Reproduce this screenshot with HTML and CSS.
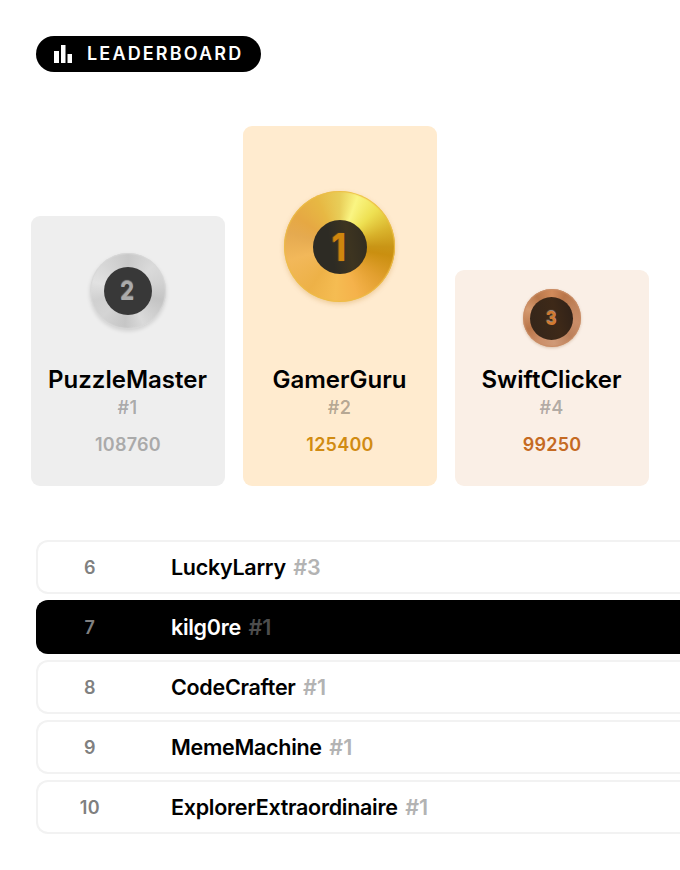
FILE: index.html
```html
<!DOCTYPE html>
<html lang="en">
<head>
<meta charset="utf-8">
<title>Leaderboard</title>
<link rel="stylesheet" href="styles.css">
</head>
<body>
<main class="page">
  <h1 class="badge">
    <svg class="badge-icon" width="19" height="18" viewBox="0 0 19 18"><path fill="#fff" d="M0 6h5v12H0zM7 0h4.5v18H7zM13.5 9h4.5v9h-4.5z"/></svg>
    <span>LEADERBOARD</span>
  </h1>
  <section class="podium">
    <article class="card silver">
      <div class="medal"><div class="core"><span>2</span></div></div>
      <h2 class="name">PuzzleMaster</h2>
      <div class="tag">#1</div>
      <div class="score">108760</div>
    </article>
    <article class="card gold">
      <div class="medal"><div class="core"><span>1</span></div></div>
      <h2 class="name">GamerGuru</h2>
      <div class="tag">#2</div>
      <div class="score">125400</div>
    </article>
    <article class="card bronze">
      <div class="medal"><div class="core"><span>3</span></div></div>
      <h2 class="name">SwiftClicker</h2>
      <div class="tag">#4</div>
      <div class="score">99250</div>
    </article>
  </section>
  <section class="list">
    <div class="row"><span class="rank">6</span><span class="player">LuckyLarry</span><span class="hash">#3</span></div>
    <div class="row current"><span class="rank">7</span><span class="player">kilg0re</span><span class="hash">#1</span></div>
    <div class="row"><span class="rank">8</span><span class="player">CodeCrafter</span><span class="hash">#1</span></div>
    <div class="row"><span class="rank">9</span><span class="player">MemeMachine</span><span class="hash">#1</span></div>
    <div class="row"><span class="rank">10</span><span class="player">ExplorerExtraordinaire</span><span class="hash">#1</span></div>
  </section>
</main>
</body>
</html>
```
FILE: styles.css
```css
* { box-sizing: border-box; }
body {
  margin: 0;
  background: #fff;
  color: #000;
  font-family: Inter, "Liberation Sans", sans-serif;
  font-weight: 600;
}
.page { height: 870px; padding: 36px 0 0 36px; }
.badge {
  display: flex;
  align-items: center;
  gap: 14px;
  width: 225px;
  height: 36px;
  margin: 0;
  padding-left: 18px;
  border-radius: 18px;
  background: #000;
  color: #fff;
  font-size: 18px;
  line-height: 36px;
  font-weight: 600;
  letter-spacing: 2.16px;
  white-space: nowrap;
}
.badge-icon { flex: none; }
.podium {
  display: flex;
  align-items: flex-end;
  gap: 18px;
  height: 360px;
  margin: 54px 0 0 -5px;
}
.card {
  display: flex;
  flex-direction: column;
  align-items: center;
  width: 194px;
  padding-right: 1px;
  border-radius: 9px;
}
.silver { height: 270px; padding-top: 37px; background: #eee; }
.gold { height: 360px; padding-top: 65px; background: #ffebcf; }
.bronze { height: 216px; padding-top: 19px; background: #faefe6; }
.medal, .core {
  display: flex;
  flex: none;
  align-items: center;
  justify-content: center;
  border-radius: 50%;
}
.core span { display: block; line-height: 1; font-weight: 700; }
.silver .medal {
  width: 76px; height: 76px; margin-bottom: 35px;
  background: conic-gradient(#c9c9c9, #dadada 45deg, #d2d2d2 75deg, #c4c4c4 105deg, #dadada 155deg, #c6c6c6 185deg, #d4d4d4 225deg, #d0d0d0 255deg, #e2e2e2 285deg, #d6d6d6 320deg, #c9c9c9);
  box-shadow: inset 0 0 1px 1px #d8d8d8, 0 2px 4px #0002;
}
.silver .core { width: 48px; height: 48px; background: #383838; }
.silver .core span { color: #ababab; font-size: 26px; text-shadow: 0 -1px 1px #ddd8; transform: scaleX(.87); }
.gold .medal {
  width: 111px; height: 111px; margin-bottom: 62px;
  background: conic-gradient(#e8cd58, #faf582 20deg, #eee052 45deg, #d9b32c 70deg, #c99516 90deg, #ca8f10 100deg, #e3a030 130deg, #f5b24b 160deg, #f5bc52 185deg, #edb147 215deg, #f2b85a 255deg, #e5aa50 285deg, #e6a843 305deg, #e7b843 335deg, #e8cd58);
  box-shadow: inset 0 0 1px 1px #edbd48, 0 2px 5px #b8700044;
}
.gold .core { width: 54px; height: 54px; background: linear-gradient(80deg, #2d2b24 35%, #3d3420 65%, #302b20); }
.gold .core span { color: #cf860d; font-size: 38px; text-shadow: -1px 0 1px #b87918; transform: scaleX(.87); }
.bronze .medal {
  width: 58px; height: 58px; margin-bottom: 17px;
  background: conic-gradient(#d28b5b, #b97549 30deg, #c0835b 60deg, #ca8d68 100deg, #bb805b 135deg, #d09a77 175deg, #cb8e68 210deg, #b97549 245deg, #d59a70 290deg, #b9774a 325deg, #d28b5b);
  box-shadow: inset 0 0 1px 1px #c98d66, 0 1px 3px #80400044;
}
.bronze .core { width: 43px; height: 43px; background: linear-gradient(75deg, #33251a, #3e2918 60%, #2d2018); }
.bronze .core span { color: #d27a30; font-size: 19px; font-weight: 800; text-shadow: 0 -1px 1px #eee8; transform: scaleX(.87); }
.name { margin: 0; font-size: 24px; line-height: 32px; font-weight: 600; white-space: nowrap; }
.tag { margin-top: -1px; font-size: 18px; line-height: 26px; letter-spacing: .3px; color: #0000004d; }
.score { margin-top: 11px; padding-left: 1px; font-size: 18px; line-height: 26px; letter-spacing: .25px; }
.silver .score { color: #aaa; }
.gold .score { color: #d18b12; }
.bronze .score { color: #c56a22; }
.list { display: grid; gap: 6px; margin-top: 54px; }
.row {
  display: flex;
  align-items: center;
  height: 54px;
  border: 2px solid #f2f2f2;
  border-right: 0;
  border-radius: 12px 0 0 12px;
  background: #fff;
  font-size: 21.5px;
}
.rank { width: 104px; margin-right: 29px; text-align: center; color: #808080; font-size: 18px; letter-spacing: .5px; }
.player { letter-spacing: -.29px; }
.hash { margin-left: 7.5px; color: #b3b3b3; }
.current { border-color: #000; background: #000; color: #fff; }
.current .hash { color: #4d4d4d; }
```
